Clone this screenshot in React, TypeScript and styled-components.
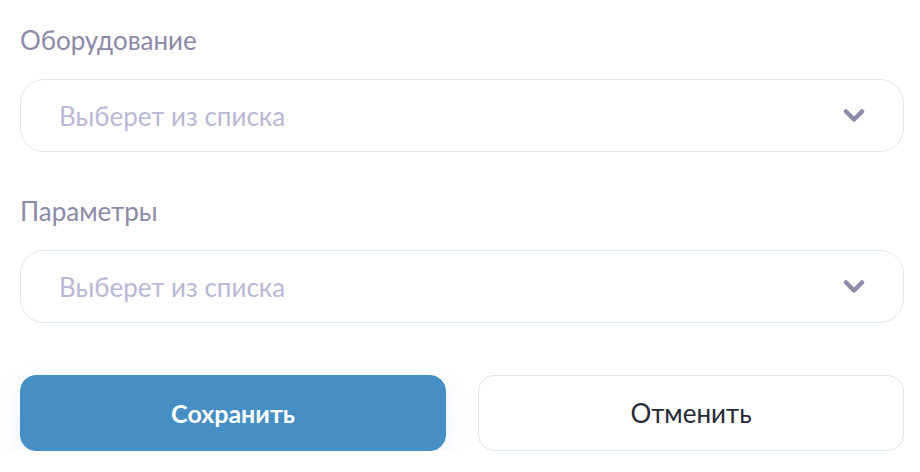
import React from "react";
import styled, { createGlobalStyle } from "styled-components";

const GlobalStyle = createGlobalStyle`
  html, body {
    margin: 0;
    padding: 0;
    background: #fff;
    font-family: Lato, "Noto Sans", sans-serif;
  }
`;

const Form = styled.form`
  display: flex;
  flex-direction: column;
  padding: 24px 16px 0 20px;
`;

const Field = styled.div`
  display: flex;
  flex-direction: column;
  gap: 23px;
  margin-bottom: 43px;
`;

const Label = styled.label`
  font-size: 26px;
  line-height: 32px;
  color: #8b8aa8;
`;

const Select = styled.div`
  box-sizing: border-box;
  height: 73px;
  border: 1px solid #dce8ee;
  border-radius: 24px;
  display: flex;
  align-items: center;
  justify-content: space-between;
  padding: 0 38px 0 38px;
  cursor: pointer;
`;

const Placeholder = styled.span`
  font-size: 26px;
  color: #b9b8d6;
`;

const Actions = styled.div`
  display: flex;
  gap: 32px;
  margin-top: 9px;
`;

const Button = styled.button<{ $primary?: boolean }>`
  flex: 1;
  height: 76px;
  box-sizing: border-box;
  border-radius: 16px;
  font-family: Lato, "Noto Sans", sans-serif;
  font-size: ${p => (p.$primary ? "25px" : "26px")};
  cursor: pointer;
  border: 1px solid ${p => (p.$primary ? "#468fc5" : "#dce8ee")};
  background: ${p => (p.$primary ? "#468fc5" : "#fff")};
  color: ${p => (p.$primary ? "#fff" : "#252a36")};
  font-weight: ${p => (p.$primary ? 700 : 400)};
  box-shadow: ${p =>
    p.$primary ? "0 8px 24px rgba(70, 143, 197, 0.12)" : "none"};
`;

const Chevron = () => (
  <svg width="22" height="16" viewBox="0 0 22 16" fill="none">
    <path
      d="M3 3.5 L11 11.5 L19 3.5"
      stroke="#8e8cac"
      strokeWidth="4.5"
      strokeLinecap="round"
      strokeLinejoin="round"
    />
  </svg>
);

const Dropdown = ({ label }: { label: string }) => (
  <Field>
    <Label>{label}</Label>
    <Select>
      <Placeholder>Выберет из списка</Placeholder>
      <Chevron />
    </Select>
  </Field>
);

export default function App() {
  return (
    <>
      <GlobalStyle />
      <Form onSubmit={e => e.preventDefault()}>
        <Dropdown label="Оборудование" />
        <Dropdown label="Параметры" />
        <Actions>
          <Button $primary type="submit">
            Сохранить
          </Button>
          <Button type="button">Отменить</Button>
        </Actions>
      </Form>
    </>
  );
}
